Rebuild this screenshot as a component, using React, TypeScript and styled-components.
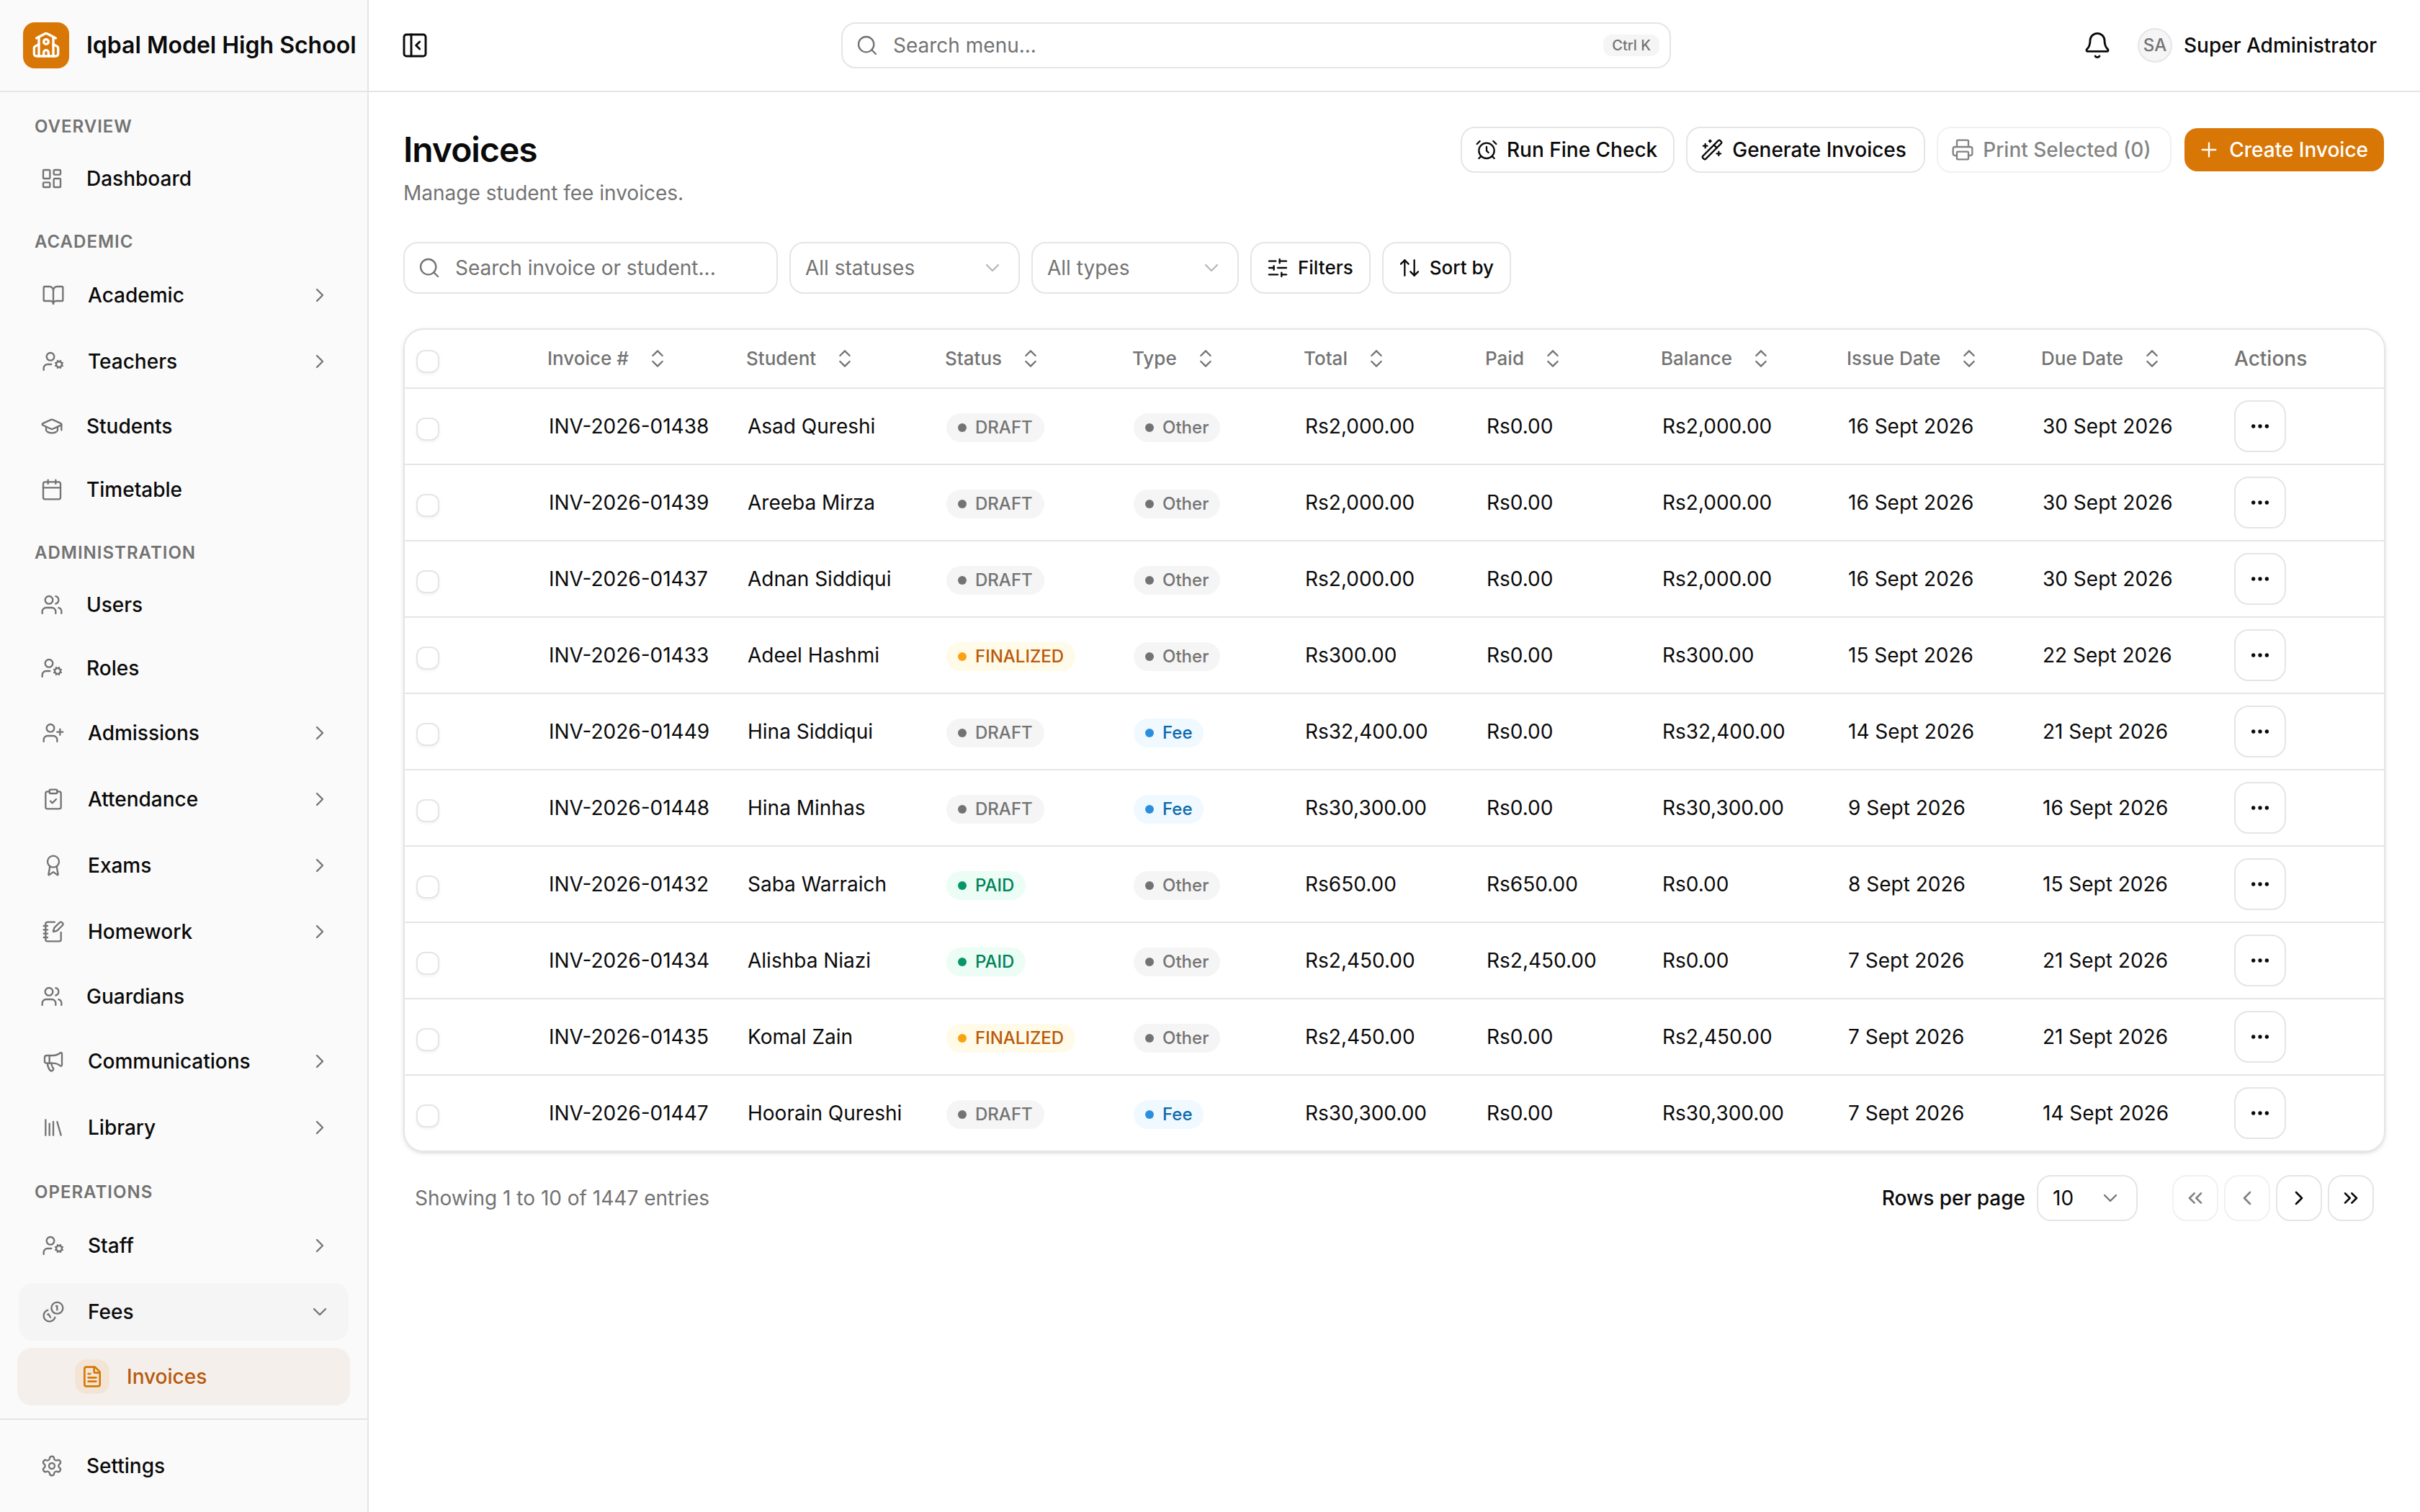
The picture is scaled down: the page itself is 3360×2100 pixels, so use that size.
import React from "react";
import styled, { createGlobalStyle, css } from "styled-components";
import {
  AlarmClock, ArrowUpDown, Award, Bell, BookOpen, Calendar, ChevronDown, ChevronLeft, ChevronRight,
  ChevronsLeft, ChevronsRight, ChevronsUpDown, ClipboardCheck, Ellipsis, FileText, GraduationCap,
  LayoutDashboard, Library, Megaphone, NotebookPen, PanelLeftClose, Plus, Printer, School, Search,
  Settings, SlidersHorizontal, UserCog, UserPlus, Users, WandSparkles,
} from "lucide-react";

const c = {
  text: "#0a0a0a",
  muted: "#737373",
  line: "#e5e5e5",
  soft: "#f5f5f5",
  side: "#fafafa",
  brand: "#d97706",
  brandText: "#b9590a",
};

const Global = createGlobalStyle`
  *, *::before, *::after { box-sizing: border-box; }
  body { margin: 0; background: #fff; color: ${c.text}; font: 500 28px/40px Inter, "Liberation Sans", sans-serif; }
  button, input, select { font: inherit; color: inherit; margin: 0; }
  a { color: inherit; text-decoration: none; }
  svg { flex: none; display: block; }
`;

const Shell = styled.div`
  display: grid;
  grid-template-columns: 512px minmax(0, 1fr);
  height: 100vh;
`;

const Sidebar = styled.aside`
  display: flex;
  flex-direction: column;
  min-height: 0;
  background: ${c.side};
  border-right: 2px solid ${c.line};
`;

const Brand = styled.div`
  display: flex;
  align-items: center;
  gap: 24px;
  height: 128px;
  flex: none;
  padding-left: 32px;
  border-bottom: 2px solid ${c.line};
  font-size: 32px;
  font-weight: 600;
  white-space: nowrap;
  overflow: hidden;
`;

const Logo = styled.span`
  display: grid;
  place-items: center;
  flex: none;
  width: 64px;
  height: 64px;
  border-radius: 16px;
  background: ${c.brand};
  color: #fff;
`;

const Nav = styled.nav`
  flex: 1;
  min-height: 0;
  overflow: hidden;
  display: flex;
  flex-direction: column;
  gap: 16px;
  padding: 16px 24px;
`;

const SectionTitle = styled.h2`
  margin: 0;
  padding: 0 24px;
  font-size: 24px;
  line-height: 64px;
  font-weight: 600;
  letter-spacing: 1px;
  color: ${c.muted};
`;

const NavList = styled.ul`
  display: flex;
  flex-direction: column;
  gap: 8px;
  margin: 0;
  padding: 0;
  list-style: none;
`;

const itemStyle = css`
  display: flex;
  align-items: center;
  gap: 24px;
  width: 100%;
  height: 80px;
  padding: 0 24px;
  border: 0;
  border-radius: 20px;
  background: none;
  text-align: left;
`;

const NavLink = styled.a<{ $active?: boolean }>`
  ${itemStyle}
  ${(p) => p.$active && css`
    padding-left: 80px;
    background: #f5efeb;
    color: ${c.brandText};
  `}
`;

const Group = styled.div`
  border: 2px solid transparent;
`;

const GroupButton = styled.button<{ $open?: boolean }>`
  ${itemStyle}
  background: ${(p) => (p.$open ? c.soft : "none")};
`;

const IconBox = styled.span<{ $active?: boolean }>`
  display: grid;
  place-items: center;
  flex: none;
  width: 48px;
  height: 48px;
  border-radius: 16px;
  color: ${(p) => (p.$active ? c.brand : c.muted)};
  background: ${(p) => (p.$active ? "#f3e5d5" : "none")};
`;

const Grow = styled.span`
  flex: 1;
`;

const Caret = styled.span`
  color: ${c.muted};
`;

const SideFooter = styled.div`
  flex: none;
  padding: 24px;
  border-top: 2px solid ${c.line};
`;

const Main = styled.div`
  display: flex;
  flex-direction: column;
  min-width: 0;
`;

const TopBar = styled.header`
  display: flex;
  align-items: center;
  flex: none;
  height: 128px;
  padding: 0 48px 0 32px;
  border-bottom: 2px solid ${c.line};
`;

const GhostButton = styled.button`
  display: grid;
  place-items: center;
  width: 64px;
  height: 64px;
  padding: 0;
  border: 0;
  background: none;
`;

const Center = styled.div`
  flex: 1;
  display: flex;
  justify-content: center;
`;

const Field = styled.label<{ $width: number; $height: number }>`
  display: flex;
  align-items: center;
  gap: 20px;
  width: ${(p) => p.$width}px;
  height: ${(p) => p.$height}px;
  padding: 0 14px 0 18px;
  border: 2px solid ${c.line};
  border-radius: 20px;
  color: ${c.muted};
`;

const FieldInput = styled.input`
  flex: 1;
  min-width: 0;
  padding: 0;
  border: 0;
  outline: 0;
  background: none;
  font-weight: 400;
  &::placeholder { color: ${c.muted}; opacity: 1; }
`;

const Kbd = styled.kbd`
  padding: 0 12px;
  border-radius: 12px;
  background: ${c.soft};
  font: inherit;
  font-size: 20px;
  line-height: 30px;
`;

const UserButton = styled.button`
  display: flex;
  align-items: center;
  gap: 16px;
  margin-left: 24px;
  padding: 0;
  border: 0;
  background: none;
  text-align: left;
`;

const UserName = styled.span`
  min-width: 280px;
`;

const Avatar = styled.span`
  display: grid;
  place-items: center;
  width: 48px;
  height: 48px;
  border: 2px solid ${c.line};
  border-radius: 50%;
  background: ${c.soft};
  color: ${c.muted};
  font-size: 24px;
`;

const Page = styled.main`
  display: flex;
  flex-direction: column;
  padding: 48px;
`;

const PageHead = styled.div`
  display: flex;
  justify-content: space-between;
  align-items: flex-start;
`;

const Title = styled.h1`
  margin: 0;
  font-size: 48px;
  line-height: 64px;
  font-weight: 600;
  letter-spacing: -1px;
`;

const Subtitle = styled.p`
  margin: 8px 0 0;
  font-weight: 400;
  color: ${c.muted};
`;

const Row = styled.div`
  display: flex;
  align-items: center;
  gap: 16px;
`;

const Toolbar = styled(Row)`
  margin: 48px 0;
`;

const Button = styled.button<{ $primary?: boolean; $tall?: boolean; $min?: number }>`
  display: flex;
  align-items: center;
  gap: 12px;
  min-width: ${(p) => p.$min ?? 0}px;
  height: ${(p) => (p.$tall ? 72 : 64)}px;
  padding: 0 22px 0 ${(p) => (p.$tall ? 20 : 18)}px;
  border: 2px solid ${(p) => (p.$primary ? "transparent" : c.line)};
  border-radius: 20px;
  background: ${(p) => (p.$primary ? c.brand : "#fff")};
  background-clip: padding-box;
  color: ${(p) => (p.$primary ? "#fff" : c.text)};
  font-size: ${(p) => (p.$tall ? 26 : 28)}px;
  white-space: nowrap;
  &:disabled { opacity: 0.5; }
`;

const SelectWrap = styled.span<{ $width: number; $height: number }>`
  display: grid;
  align-items: center;
  width: ${(p) => p.$width}px;
  height: ${(p) => p.$height}px;
  & > * { grid-area: 1 / 1; }
  & > svg {
    justify-self: end;
    margin-right: 22px;
    color: ${c.muted};
    pointer-events: none;
  }
`;

const Select = styled.select<{ $muted?: boolean }>`
  appearance: none;
  width: 100%;
  height: 100%;
  padding: 0 48px 0 20px;
  border: 2px solid ${c.line};
  border-radius: 20px;
  background: #fff;
  color: ${(p) => (p.$muted ? c.muted : c.text)};
  font-weight: 400;
`;

const Card = styled.div`
  overflow: hidden;
  border: 2px solid ${c.line};
  border-radius: 28px;
  box-shadow: 0 2px 6px rgba(0, 0, 0, 0.1), 0 2px 4px -2px rgba(0, 0, 0, 0.1);
`;

const Table = styled.table`
  width: 100%;
  table-layout: fixed;
  border-spacing: 0;
  border-collapse: separate;
`;

const Th = styled.th`
  height: 82px;
  padding: 0 16px;
  border-bottom: 2px solid ${c.line};
  color: ${c.muted};
  text-align: left;
  font-weight: 500;
  white-space: nowrap;
`;

const SortButton = styled.button`
  display: flex;
  align-items: center;
  gap: 24px;
  padding: 0;
  border: 0;
  background: none;
  font-size: 26px;
`;

const Td = styled.td`
  height: 106px;
  padding: 0 16px 0 18px;
  border-bottom: 2px solid ${c.line};
  font-weight: 400;
  white-space: nowrap;
  &:first-child, &:last-child {
    padding-left: 16px;
  }
  tr:last-child > & {
    height: 104px;
    border-bottom: 0;
  }
`;

const Check = styled.input`
  appearance: none;
  display: block;
  width: 32px;
  height: 32px;
  margin: 8px 0 0;
  border: 2px solid ${c.line};
  border-radius: 12px;
  background: #fff;
  box-shadow: 0 2px 4px rgba(0, 0, 0, 0.05);
`;

type Tone = "gray" | "amber" | "green" | "blue";
const tones: Record<Tone, [string, string, string]> = {
  gray: ["#f5f5f5", "#737373", "#737373"],
  amber: ["#fffbe8", "#b9590a", "#fca10f"],
  green: ["#ecfdf5", "#008259", "#059669"],
  blue: ["#f0f9ff", "#0b69ae", "#2b8fe0"],
};

const Badge = styled.span<{ $tone: Tone }>`
  display: inline-flex;
  align-items: center;
  gap: 12px;
  height: 40px;
  margin-top: 4px;
  padding: 0 16px;
  border-radius: 20px;
  vertical-align: middle;
  background: ${(p) => tones[p.$tone][0]};
  color: ${(p) => tones[p.$tone][1]};
  font-size: 24px;
  font-weight: 500;
  &::before {
    content: "";
    width: 12px;
    height: 12px;
    border-radius: 50%;
    background: ${(p) => tones[p.$tone][2]};
  }
`;

const SquareButton = styled.button<{ $size: number }>`
  display: grid;
  place-items: center;
  width: ${(p) => p.$size}px;
  height: ${(p) => p.$size}px;
  padding: 0;
  border: 2px solid ${c.line};
  border-radius: 20px;
  background: #fff;
  &:disabled { opacity: 0.5; }
`;

const TableFoot = styled.div`
  display: flex;
  align-items: center;
  justify-content: space-between;
  padding: 32px 16px 0;
`;

const Summary = styled.span`
  font-weight: 400;
  color: ${c.muted};
`;

const Pager = styled.div`
  display: flex;
  gap: 8px;
  margin-left: 32px;
`;

type IconType = React.ComponentType<any>;

const I = ({ as: As, size = 32, w = 1.75, opacity = 1 }: { as: IconType; size?: number; w?: number; opacity?: number }) => (
  <As size={size} strokeWidth={w} opacity={opacity} aria-hidden />
);

const FeeCoins: IconType = ({ size, ...rest }) => (
  <svg
    width={size}
    height={size}
    viewBox="0 0 24 24"
    fill="none"
    stroke="currentColor"
    strokeLinecap="round"
    strokeLinejoin="round"
    {...rest}
  >
    <path d="M13.744 17.736a6 6 0 1 1-7.48-7.48" />
    <path d="M15 6h1v4" />
    <path d="m6.134 14.768.866-.5 2 3.464" />
    <circle cx="16" cy="8" r="6" />
  </svg>
);

type Item = { label: string; icon: IconType; group?: boolean; open?: boolean };
const sections: { title: string; items: Item[] }[] = [
  { title: "OVERVIEW", items: [{ label: "Dashboard", icon: LayoutDashboard }] },
  {
    title: "ACADEMIC",
    items: [
      { label: "Academic", icon: BookOpen, group: true },
      { label: "Teachers", icon: UserCog, group: true },
      { label: "Students", icon: GraduationCap },
      { label: "Timetable", icon: Calendar },
    ],
  },
  {
    title: "ADMINISTRATION",
    items: [
      { label: "Users", icon: Users },
      { label: "Roles", icon: UserCog },
      { label: "Admissions", icon: UserPlus, group: true },
      { label: "Attendance", icon: ClipboardCheck, group: true },
      { label: "Exams", icon: Award, group: true },
      { label: "Homework", icon: NotebookPen, group: true },
      { label: "Guardians", icon: Users },
      { label: "Communications", icon: Megaphone, group: true },
      { label: "Library", icon: Library, group: true },
    ],
  },
  {
    title: "OPERATIONS",
    items: [
      { label: "Staff", icon: UserCog, group: true },
      { label: "Fees", icon: FeeCoins, group: true, open: true },
    ],
  },
];

const columns: [string, number][] = [
  ["Invoice #", 276], ["Student", 276], ["Status", 260], ["Type", 238], ["Total", 252],
  ["Paid", 244], ["Balance", 258], ["Issue Date", 270], ["Due Date", 268],
];

const rows: string[][] = [
  ["01438", "Asad Qureshi", "DRAFT", "Other", "2,000.00", "0.00", "2,000.00", "16", "30"],
  ["01439", "Areeba Mirza", "DRAFT", "Other", "2,000.00", "0.00", "2,000.00", "16", "30"],
  ["01437", "Adnan Siddiqui", "DRAFT", "Other", "2,000.00", "0.00", "2,000.00", "16", "30"],
  ["01433", "Adeel Hashmi", "FINALIZED", "Other", "300.00", "0.00", "300.00", "15", "22"],
  ["01449", "Hina Siddiqui", "DRAFT", "Fee", "32,400.00", "0.00", "32,400.00", "14", "21"],
  ["01448", "Hina Minhas", "DRAFT", "Fee", "30,300.00", "0.00", "30,300.00", "9", "16"],
  ["01432", "Saba Warraich", "PAID", "Other", "650.00", "650.00", "0.00", "8", "15"],
  ["01434", "Alishba Niazi", "PAID", "Other", "2,450.00", "2,450.00", "0.00", "7", "21"],
  ["01435", "Komal Zain", "FINALIZED", "Other", "2,450.00", "0.00", "2,450.00", "7", "21"],
  ["01447", "Hoorain Qureshi", "DRAFT", "Fee", "30,300.00", "0.00", "30,300.00", "7", "14"],
];

const badgeTone: Record<string, Tone> = { DRAFT: "gray", FINALIZED: "amber", PAID: "green", Other: "gray", Fee: "blue" };

function NavItem({ item }: { item: Item }) {
  const body = (
    <>
      <IconBox><I as={item.icon} /></IconBox>
      <Grow>{item.label}</Grow>
    </>
  );
  return (
    <li>
      {item.group ? (
        <Group>
          <GroupButton type="button" $open={item.open} aria-expanded={!!item.open}>
            {body}
            <Caret><I as={item.open ? ChevronDown : ChevronRight} /></Caret>
          </GroupButton>
        </Group>
      ) : (
        <NavLink href="#">{body}</NavLink>
      )}
    </li>
  );
}

export default function App() {
  return (
    <>
      <Global />
      <Shell>
        <Sidebar>
          <Brand>
            <Logo><I as={School} size={40} w={2} /></Logo>
            Iqbal Model High School
          </Brand>
          <Nav aria-label="Main">
            {sections.map((s) => (
              <section key={s.title}>
                <SectionTitle>{s.title}</SectionTitle>
                <NavList>
                  {s.items.map((it) => <NavItem key={it.label} item={it} />)}
                  {s.title === "OPERATIONS" && (
                    <li>
                      <NavLink href="#" $active aria-current="page">
                        <IconBox $active><I as={FileText} w={2} /></IconBox>
                        <Grow>Invoices</Grow>
                      </NavLink>
                    </li>
                  )}
                </NavList>
              </section>
            ))}
          </Nav>
          <SideFooter>
            <NavLink href="#">
              <IconBox><I as={Settings} /></IconBox>
              <Grow>Settings</Grow>
            </NavLink>
          </SideFooter>
        </Sidebar>

        <Main>
          <TopBar>
            <GhostButton type="button" aria-label="Collapse sidebar"><I as={PanelLeftClose} size={40} /></GhostButton>
            <Center>
              <Field $width={1152} $height={64}>
                <I as={Search} />
                <FieldInput type="text" placeholder="Search menu..." aria-label="Search menu" />
                <Kbd>Ctrl K</Kbd>
              </Field>
            </Center>
            <GhostButton type="button" aria-label="Notifications"><I as={Bell} size={40} /></GhostButton>
            <UserButton type="button">
              <Avatar>SA</Avatar>
              <UserName>Super Administrator</UserName>
            </UserButton>
          </TopBar>

          <Page>
            <PageHead>
              <div>
                <Title>Invoices</Title>
                <Subtitle>Manage student fee invoices.</Subtitle>
              </div>
              <Row>
                <Button type="button"><I as={AlarmClock} />Run Fine Check</Button>
                <Button type="button" $min={332}><I as={WandSparkles} />Generate Invoices</Button>
                <Button type="button" $min={326} disabled><I as={Printer} />Print Selected (0)</Button>
                <Button type="button" $primary><I as={Plus} />Create Invoice</Button>
              </Row>
            </PageHead>

            <Toolbar>
              <Field $width={520} $height={72}>
                <I as={Search} />
                <FieldInput type="text" placeholder="Search invoice or student..." aria-label="Search invoice or student" />
              </Field>
              <SelectWrap $width={320} $height={72}>
                <Select $muted aria-label="Status"><option>All statuses</option></Select>
                <I as={ChevronDown} opacity={0.5} />
              </SelectWrap>
              <SelectWrap $width={288} $height={72}>
                <Select $muted aria-label="Type"><option>All types</option></Select>
                <I as={ChevronDown} opacity={0.5} />
              </SelectWrap>
              <Button type="button" $tall><I as={SlidersHorizontal} />Filters</Button>
              <Button type="button" $tall><I as={ArrowUpDown} />Sort by</Button>
            </Toolbar>

            <Card>
              <Table>
                <colgroup>
                  <col style={{ width: 182 }} />
                  {columns.map(([n, w]) => <col key={n} style={{ width: w }} />)}
                  <col style={{ width: 224 }} />
                </colgroup>
                <thead>
                  <tr>
                    <Th><Check type="checkbox" aria-label="Select all" /></Th>
                    {columns.map(([n]) => (
                      <Th key={n}><SortButton type="button">{n}<I as={ChevronsUpDown} /></SortButton></Th>
                    ))}
                    <Th>Actions</Th>
                  </tr>
                </thead>
                <tbody>
                  {rows.map(([no, student, status, type, total, paid, balance, issued, due]) => (
                    <tr key={no}>
                      <Td><Check type="checkbox" aria-label={`Select INV-2026-${no}`} /></Td>
                      <Td>INV-2026-{no}</Td>
                      <Td>{student}</Td>
                      <Td><Badge $tone={badgeTone[status]}>{status}</Badge></Td>
                      <Td><Badge $tone={badgeTone[type]}>{type}</Badge></Td>
                      <Td>Rs{total}</Td>
                      <Td>Rs{paid}</Td>
                      <Td>Rs{balance}</Td>
                      <Td>{issued} Sept 2026</Td>
                      <Td>{due} Sept 2026</Td>
                      <Td><SquareButton type="button" $size={72} aria-label="Row actions"><I as={Ellipsis} w={2} /></SquareButton></Td>
                    </tr>
                  ))}
                </tbody>
              </Table>
            </Card>

            <TableFoot>
              <Summary>Showing 1 to 10 of 1447 entries</Summary>
              <Row>
                <label htmlFor="page-size">Rows per page</label>
                <SelectWrap $width={140} $height={64}>
                  <Select id="page-size"><option>10</option></Select>
                  <I as={ChevronDown} />
                </SelectWrap>
                <Pager>
                  <SquareButton type="button" $size={64} disabled aria-label="First page"><I as={ChevronsLeft} w={2} /></SquareButton>
                  <SquareButton type="button" $size={64} disabled aria-label="Previous page"><I as={ChevronLeft} w={2} /></SquareButton>
                  <SquareButton type="button" $size={64} aria-label="Next page"><I as={ChevronRight} w={2} /></SquareButton>
                  <SquareButton type="button" $size={64} aria-label="Last page"><I as={ChevronsRight} w={2} /></SquareButton>
                </Pager>
              </Row>
            </TableFoot>
          </Page>
        </Main>
      </Shell>
    </>
  );
}
